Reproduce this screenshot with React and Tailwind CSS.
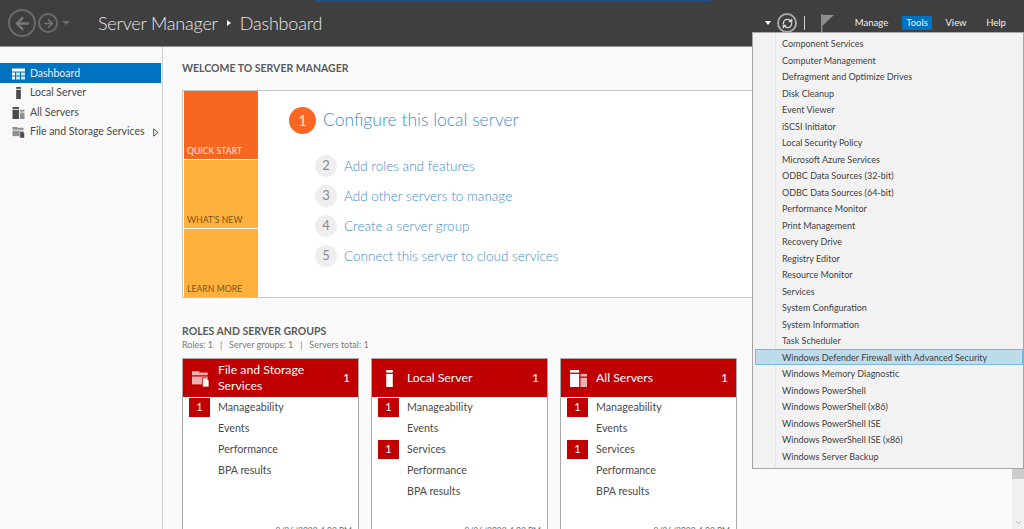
import { ArrowLeft, ArrowRight, RefreshCw, ChevronDown } from "lucide-react";

const font = { fontFamily: "Lato, 'Open Sans', sans-serif" };

const navItems = [
  { label: "Dashboard", icon: "grid", active: true },
  { label: "Local Server", icon: "server" },
  { label: "All Servers", icon: "servers" },
  { label: "File and Storage Services", icon: "files", arrow: true },
];

const toolItems = [
  "Component Services",
  "Computer Management",
  "Defragment and Optimize Drives",
  "Disk Cleanup",
  "Event Viewer",
  "iSCSI Initiator",
  "Local Security Policy",
  "Microsoft Azure Services",
  "ODBC Data Sources (32-bit)",
  "ODBC Data Sources (64-bit)",
  "Performance Monitor",
  "Print Management",
  "Recovery Drive",
  "Registry Editor",
  "Resource Monitor",
  "Services",
  "System Configuration",
  "System Information",
  "Task Scheduler",
  "Windows Defender Firewall with Advanced Security",
  "Windows Memory Diagnostic",
  "Windows PowerShell",
  "Windows PowerShell (x86)",
  "Windows PowerShell ISE",
  "Windows PowerShell ISE (x86)",
  "Windows Server Backup",
];

const steps = [
  [2, "Add roles and features"],
  [3, "Add other servers to manage"],
  [4, "Create a server group"],
  [5, "Connect this server to cloud services"],
];

const cards = [
  { title: "File and Storage Services", icon: "files", rows: [["Manageability", 1], ["Events"], ["Performance"], ["BPA results"]] },
  { title: "Local Server", icon: "server", rows: [["Manageability", 1], ["Events"], ["Services", 1], ["Performance"], ["BPA results"]] },
  { title: "All Servers", icon: "servers", rows: [["Manageability", 1], ["Events"], ["Services", 1], ["Performance"], ["BPA results"]] },
];

const NavIcon = ({ type, light, className }) => {
  const a = light ? "#ffffff" : "#4a4a4a";
  const b = light ? "#f0b0b0" : "#8f8f8f";
  if (type === "grid") {
    return (
      <svg viewBox="0 0 13 11" className={className}>
        <rect width="13" height="3" fill="#fff" />
        <rect y="4" width="3" height="3" fill="#fff" />
        <rect x="4" y="4" width="4" height="3" fill="#cfe4f3" />
        <rect x="9" y="4" width="4" height="3" fill="#cfe4f3" />
        <rect y="8" width="3" height="3" fill="#fff" />
        <rect x="4" y="8" width="4" height="3" fill="#cfe4f3" />
        <rect x="9" y="8" width="4" height="3" fill="#cfe4f3" />
      </svg>
    );
  }
  if (type === "server") {
    return (
      <svg viewBox="0 0 13 13" className={className}>
        <rect x="4" y="0" width="5" height="2" fill={a} />
        <rect x="4" y="3" width="5" height="10" fill={a} />
      </svg>
    );
  }
  if (type === "servers") {
    return (
      <svg viewBox="0 0 13 13" className={className}>
        <rect x="0" y="0" width="7" height="2" fill={a} />
        <rect x="0" y="3" width="7" height="10" fill={a} />
        <rect x="8" y="3" width="5" height="2" fill={b} />
        <rect x="8" y="6" width="5" height="7" fill={b} />
      </svg>
    );
  }
  return (
    <svg viewBox="0 0 13 13" className={className}>
      <path d="M0 1h5l1 1h6v2H0z" fill={b} />
      <rect x="0" y="5" width="12" height="6" fill={b} />
      <path d="M8 6h3l2 2v5H8z" fill={a} stroke={light ? "#c00000" : "#f5f5f5"} strokeWidth="0.6" />
    </svg>
  );
};

const CountBox = ({ value }) => (
  <div className="w-[21px] h-[19px] bg-[#c00000] text-white text-[11px] flex items-center justify-center">{value}</div>
);

const GroupCard = ({ card }) => (
  <div className="w-[177px] h-[200px] border border-[#a9a9a9] bg-white flex flex-col shrink-0">
    <div className="h-[38px] bg-[#c00000] text-white flex items-center pl-[9px] pr-[8px]">
      <NavIcon type={card.icon} light className="w-[17px] h-[17px] shrink-0" />
      <div className="ml-[9px] flex-1 text-[12.25px] leading-[16.5px]">{card.title}</div>
      <div className="text-[12px]">1</div>
    </div>
    <div className="h-[127px]">
      {card.rows.map(([label, count]) => (
        <div key={label} className="h-[21px] flex items-center pl-[6px] text-[#4a4a4a] text-[10.7px]">
          <div className="w-[23px] mr-[6px]">{count ? <CountBox value={count} /> : null}</div>
          {label}
        </div>
      ))}
    </div>
    <div className="text-right pr-[6px] text-[#6a6a6a] text-[8.5px] leading-[14px]">9/26/2022 4:02 PM</div>
  </div>
);

export default function App() {
  return (
    <div className="relative w-[1024px] h-[529px] overflow-hidden bg-[#fafafa] flex flex-col" style={font}>
      {/* Title bar */}
      <header className="h-[47px] shrink-0 bg-[#3f3f3f] border-b border-[#8f8f8f] flex items-center text-white">
        <div className="flex items-center pl-[8px]">
          <div className="w-[28px] h-[28px] rounded-full border-2 border-[#6b6b6b] flex items-center justify-center">
            <ArrowLeft size={19} strokeWidth={3} color="#777777" />
          </div>
          <div className="ml-[2px] w-[20px] h-[20px] rounded-full border-2 border-[#6b6b6b] flex items-center justify-center">
            <ArrowRight size={13} strokeWidth={3} color="#777777" />
          </div>
          <div className="ml-[4px] w-0 h-0 border-x-[4px] border-x-transparent border-t-[4px] border-t-[#6b6b6b]" />
        </div>
        <div className="ml-[28px] flex items-center text-[18px] tracking-[-0.2px] font-light text-[#e6e6e6]">
          <span>Server Manager</span>
          <span className="mx-[9px] w-0 h-0 border-y-[3px] border-y-transparent border-l-[4px] border-l-white" />
          <span>Dashboard</span>
        </div>
        <div className="flex-1" />
        <div className="flex items-center pr-[18px]">
          <div className="w-0 h-0 border-x-[3px] border-x-transparent border-t-[4px] border-t-white" />
          <div className="ml-[6px] w-[20px] h-[20px] rounded-full border-2 border-[#a8a8a8] flex items-center justify-center">
            <RefreshCw size={11} strokeWidth={3} color="#d8d8d8" />
          </div>
          <div className="ml-[7px] w-[1px] h-[14px] bg-[#cfcfcf]" />
          <svg viewBox="0 0 13 19" className="ml-[16px] w-[13px] h-[19px]">
            <path d="M0.7 0V19" stroke="#8f8f8f" strokeWidth="1.4" fill="none" />
            <path d="M1.2 1H13L1.2 12z" fill="#8f8f8f" />
          </svg>
          <div className="ml-[17px] flex items-center text-[9.5px] text-[#f0f0f0]">
            <span className="w-[41px] text-center h-[14px] leading-[14px]">Manage</span>
            <span className="ml-[10px] w-[30px] text-center h-[14px] leading-[14px] bg-[#0072c0] text-[#e8f1f8]">Tools</span>
            <span className="ml-[10px] w-[28px] text-center h-[14px] leading-[14px]">View</span>
            <span className="ml-[16px] w-[20px] text-center h-[14px] leading-[14px]">Help</span>
          </div>
        </div>
      </header>

      <div className="flex flex-1 min-h-0">
        {/* Sidebar */}
        <aside className="w-[163px] shrink-0 bg-[#f9f9f9] border-r border-[#cfcfcf] pt-[16px]">
          {navItems.map((item) => (
            <div
              key={item.label}
              className={`h-[19.5px] pt-[2px] flex items-center pl-[12px] text-[10.5px] ${
                item.active ? "bg-[#0072c0] text-[#e8f1f8] w-[161px]" : "text-[#4a4a4a]"
              }`}
            >
              <NavIcon type={item.icon} className="w-[13px] h-[12px] shrink-0" />
              <span className="ml-[5px] whitespace-nowrap">{item.label}</span>
              {item.arrow ? (
                <svg viewBox="0 0 6 9" className="ml-[8px] w-[6px] h-[9px]">
                  <path d="M0.7 0.8V8.2L5.2 4.5z" fill="none" stroke="#555555" strokeWidth="1" />
                </svg>
              ) : null}
            </div>
          ))}
        </aside>

        {/* Main */}
        <main className="flex-1 min-w-0 pl-[19px] pt-[14px]">
          <h2 className="text-[10.5px] font-bold leading-[14px] text-[#5a5a5a] whitespace-nowrap">WELCOME TO SERVER MANAGER</h2>

          <section className="mt-[15px] w-[600px] h-[208px] border border-[#c4c4c4] bg-white flex pl-[1px]">
            <div className="w-[74px] flex flex-col gap-[1px] text-[8.7px] leading-[12px]">
              <div className="flex-1 bg-[#f76722] text-[#fbe3d6] flex items-end pl-[3px] pb-[2px]">QUICK START</div>
              <div className="flex-1 bg-[#ffb13d] text-[#7c5414] flex items-end pl-[3px] pb-[2px]">WHAT'S NEW</div>
              <div className="flex-1 bg-[#ffb13d] text-[#7c5414] flex items-end pl-[3px] pb-[2px]">LEARN MORE</div>
            </div>
            <div className="pl-[31px] pt-[16px]">
              <div className="flex items-center">
                <div className="w-[27px] h-[27px] rounded-full bg-[#f76722] text-[#fde4d8] text-[15px] flex items-center justify-center">1</div>
                <span className="ml-[7px] text-[17.5px] font-light text-[#3f8ccc] whitespace-nowrap">Configure this local server</span>
              </div>
              <div className="mt-[21px] ml-[26px] flex flex-col gap-[8px]">
                {steps.map(([n, text]) => (
                  <div key={n} className="flex items-center h-[22px]">
                    <div className="w-[22px] h-[22px] rounded-full bg-[#eeeeee] text-[#8a8a8a] text-[13px] flex items-center justify-center">{n}</div>
                    <span className="ml-[7px] text-[13.5px] font-light text-[#3f8ccc] whitespace-nowrap">{text}</span>
                  </div>
                ))}
              </div>
            </div>
          </section>

          <h2 className="mt-[26px] text-[10.5px] font-bold leading-[14px] text-[#5a5a5a]">ROLES AND SERVER GROUPS</h2>
          <div className="text-[9px] leading-[13px] text-[#7a7a7a] whitespace-pre">Roles: 1   |   Server groups: 1   |   Servers total: 1</div>
          <div className="mt-[7px] flex gap-[12px]">
            {cards.map((card) => (
              <GroupCard key={card.title} card={card} />
            ))}
          </div>
        </main>

        {/* Scrollbar */}
        <div className="w-[12px] shrink-0 bg-[#f0f0f0] flex flex-col items-center">
          <div className="h-[420px]" />
          <div className="w-[12px] h-[12px] bg-[#cdcdcd]" />
          <div className="flex-1" />
          <ChevronDown size={9} strokeWidth={2} color="#a0a0a0" className="mb-[2px]" />
        </div>
      </div>

      {/* Top edge of the window behind */}
      <div className="absolute left-[315px] top-0 w-[396px] h-[2px] bg-[#1f4e8c] rounded-b-sm" />

      {/* Tools dropdown */}
      <div className="absolute left-[752px] top-[32px] w-[272px] border border-[#a6a6a6] bg-[#f2f2f2] pt-[2px] pb-[4px] text-[9px] text-[#3f3f3f]">
        <div className="absolute left-[22px] top-0 bottom-0 w-[1px] bg-[#e6e6e6]" />
        {toolItems.map((item) => (
          <div
            key={item}
            className={`relative h-[16.5px] leading-[15px] ml-[2px] pl-[26px] border whitespace-nowrap ${
              item.startsWith("Windows Defender") ? "bg-[#bcdcec] border-[#7cb8dc]" : "border-transparent"
            }`}
          >
            {item}
          </div>
        ))}
      </div>
    </div>
  );
}
